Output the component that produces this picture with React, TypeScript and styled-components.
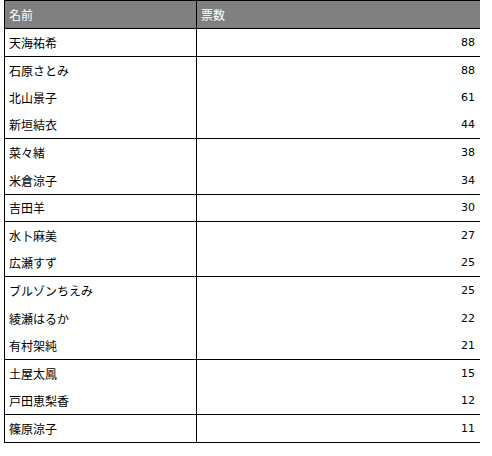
import React from "react";
import styled, { createGlobalStyle } from "styled-components";

interface Vote {
  name: string;
  count: number;
}

const groups: Vote[][] = [
  [{ name: "天海祐希", count: 88 }],
  [
    { name: "石原さとみ", count: 88 },
    { name: "北山景子", count: 61 },
    { name: "新垣結衣", count: 44 },
  ],
  [
    { name: "菜々緒", count: 38 },
    { name: "米倉涼子", count: 34 },
  ],
  [{ name: "吉田羊", count: 30 }],
  [
    { name: "水卜麻美", count: 27 },
    { name: "広瀬すず", count: 25 },
  ],
  [
    { name: "ブルゾンちえみ", count: 25 },
    { name: "綾瀬はるか", count: 22 },
    { name: "有村架純", count: 21 },
  ],
  [
    { name: "土屋太鳳", count: 15 },
    { name: "戸田恵梨香", count: 12 },
  ],
  [{ name: "篠原涼子", count: 11 }],
];

const GlobalStyle = createGlobalStyle`
  body {
    margin: 0;
    background: #fff;
    font-family: "DejaVu Sans", "Noto Sans CJK JP", sans-serif;
  }
`;

const App: React.FC = () => {
  return (
    <Wrapper>
      <GlobalStyle />
      <Table>
        <colgroup>
          <col style={{ width: 192 }} />
          <col />
        </colgroup>
        <thead>
          <tr>
            <HeadCell>名前</HeadCell>
            <HeadCell>票数</HeadCell>
          </tr>
        </thead>
        {groups.map((group, i) => (
          <Group key={i}>
            {group.map((item) => (
              <Row key={item.name}>
                <NameCell>{item.name}</NameCell>
                <CountCell>{item.count}</CountCell>
              </Row>
            ))}
          </Group>
        ))}
      </Table>
    </Wrapper>
  );
};

const Wrapper = styled.div`
  padding: 0 12px 0 4px;
`;

const Table = styled.table`
  width: 476px;
  table-layout: fixed;
  border-collapse: collapse;
  border-top: 1px solid #000;
  border-left: 1px solid #000;
  border-bottom: 1px solid #000;
  font-size: 11px;
  color: #000;
`;

const HeadCell = styled.th`
  height: 27px;
  padding: 0 4px;
  background-color: #808080;
  color: #fff;
  font-weight: normal;
  font-size: 12px;
  text-align: left;
  font-family: "Noto Sans CJK JP", sans-serif;
  & + & {
    border-left: 1px solid #000;
  }
`;

const Group = styled.tbody`
  border-top: 1px solid #000;
`;

const Row = styled.tr`
  height: 27.6px;
`;

const NameCell = styled.td`
  padding: 0 4px;
  font-size: 12px;
  font-family: "Noto Sans CJK JP", sans-serif;
  border-right: 1px solid #000;
  white-space: nowrap;
`;

const CountCell = styled.td`
  padding: 0 5px 0 4px;
  text-align: right;
  font-family: "DejaVu Sans", sans-serif;
  font-size: 11px;
`;

export default App;
